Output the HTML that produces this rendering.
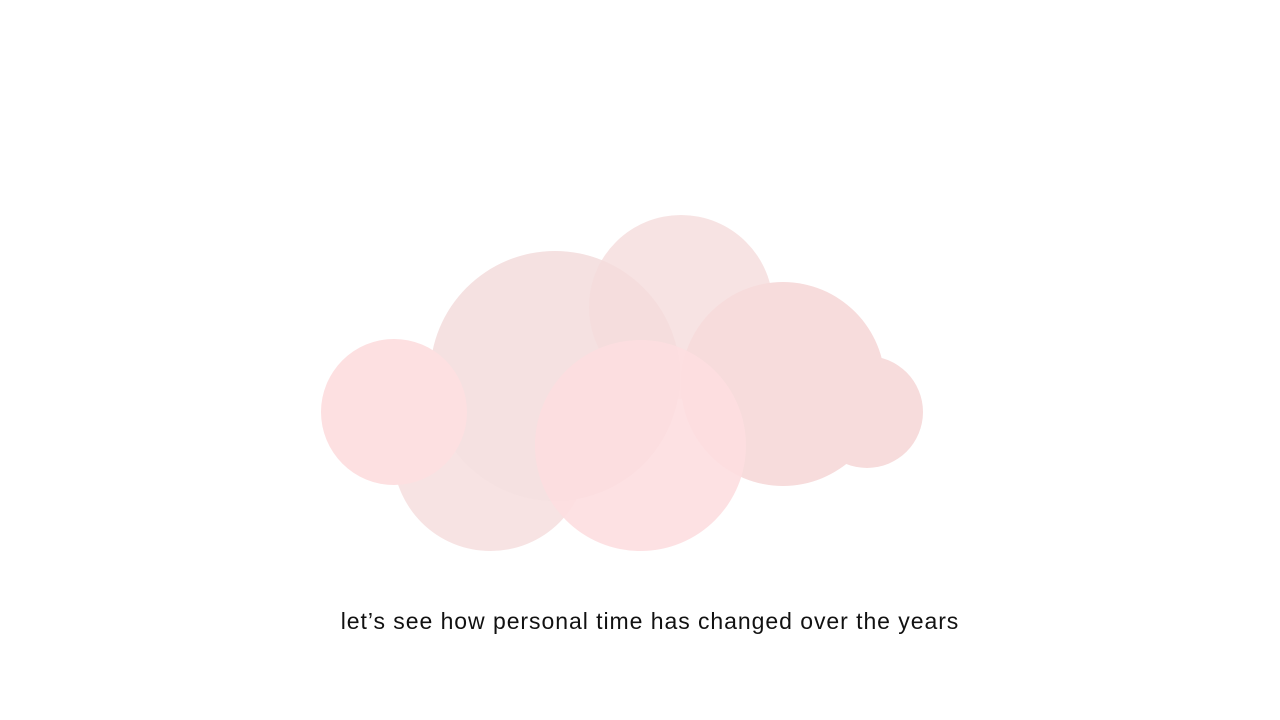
<!DOCTYPE html>
<html><head><style>
html,body{margin:0;padding:0;background:#fff;width:1280px;height:720px;overflow:hidden}
.c{position:absolute;border-radius:50%}
.t{position:absolute;left:0;width:1300px;top:608px;text-align:center;font-family:"Liberation Sans",sans-serif;font-size:23px;letter-spacing:0.95px;color:#111}
</style></head><body>
<div class="c" style="left:393px;top:356px;width:195px;height:195px;background:#f7e3e3"></div>
<div class="c" style="left:430px;top:251px;width:250px;height:250px;background:#f5e1e1"></div>
<div class="c" style="left:589px;top:215px;width:184px;height:184px;background:rgba(245,220,220,0.8)"></div>
<div class="c" style="left:811px;top:356px;width:112px;height:112px;background:#f7dcdc"></div>
<div class="c" style="left:681px;top:282px;width:204px;height:204px;background:#f7dcdc"></div>
<div class="c" style="left:321px;top:339px;width:146px;height:146px;background:#fde0e1"></div>
<div class="c" style="left:535px;top:340px;width:211px;height:211px;background:rgba(253,222,224,0.9)"></div>
<div class="t">let’s see how personal time has changed over the years</div>
</body></html>
